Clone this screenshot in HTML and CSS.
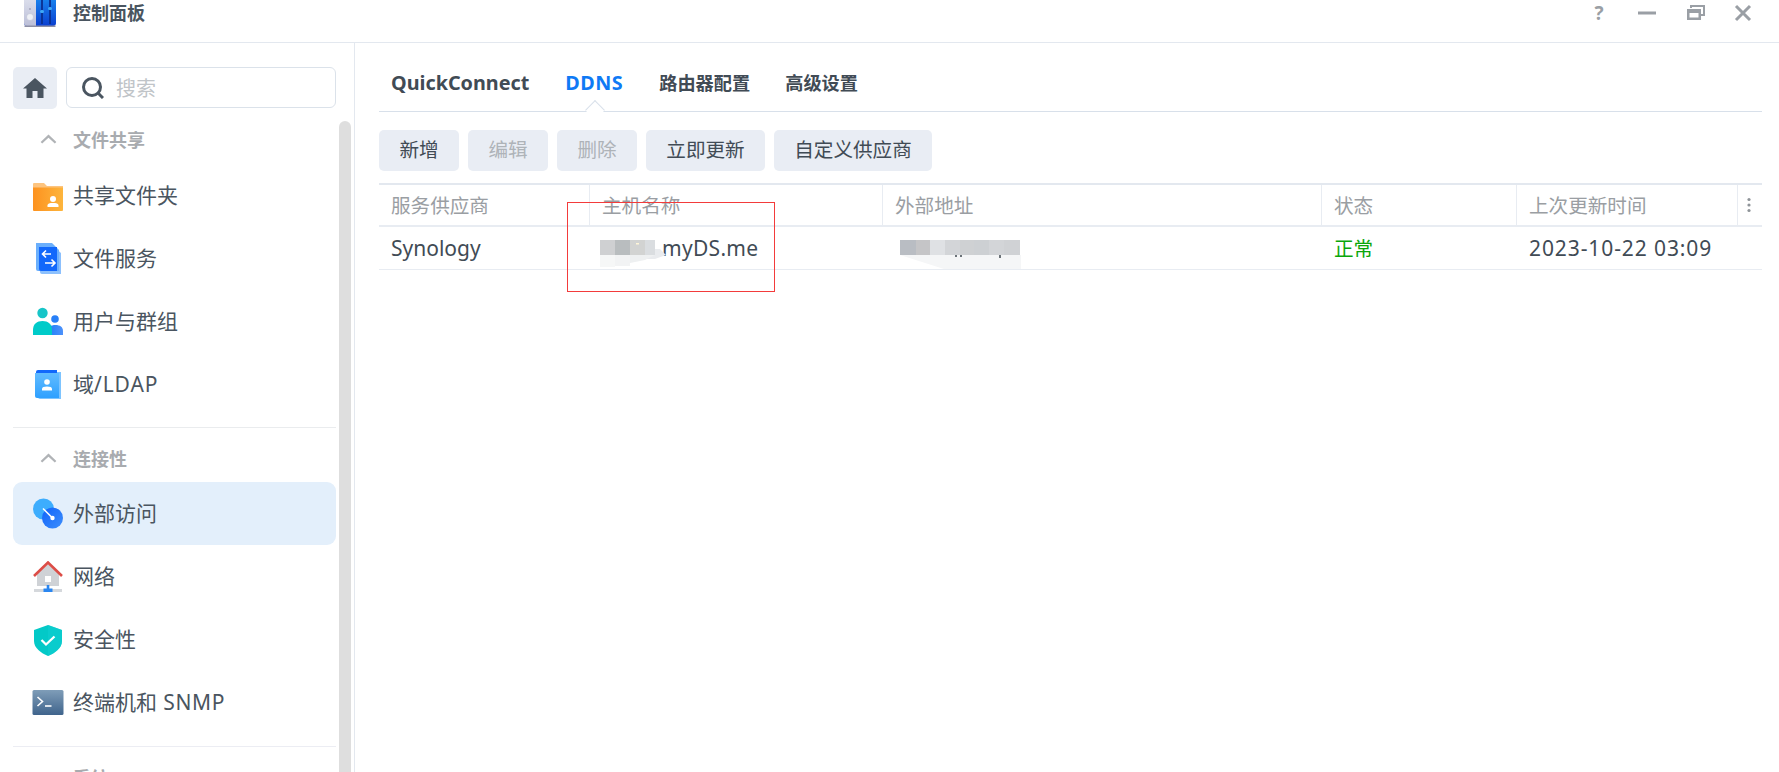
FILE: index.html
```html
<!DOCTYPE html>
<html lang="zh">
<head>
<meta charset="utf-8">
<title>控制面板</title>
<link rel="stylesheet" href="styles.css">
</head>
<body>
<div class="window">
  <header class="titlebar">
    <div class="title-left">
      <svg class="app-icon" viewBox="0 0 34 28">
        <defs><linearGradient id="appb" x1="0" y1="0" x2="0" y2="1"><stop offset="0" stop-color="#1a8af0"/><stop offset="1" stop-color="#0b3fd0"/></linearGradient>
        <linearGradient id="appg" x1="0" y1="0" x2="0" y2="1"><stop offset="0" stop-color="#dfe2ee"/><stop offset="1" stop-color="#bcbfd8"/></linearGradient></defs>
        <rect x="1" y="-4" width="32" height="30" rx="3" fill="url(#appb)"/>
        <path d="M4-4h9v30H4a3 3 0 0 1-3-3V-1a3 3 0 0 1 3-3z" fill="url(#appg)"/>
        <rect x="1.500" y="25.500" width="31" height="1.500" fill="#8d8fa5"/>
        <circle cx="7" cy="17" r="3.500" fill="#eef0f6" stroke="#b5b8cc" stroke-width=".5"/>
        <rect x="6.500" y="8" width="1" height="2" fill="#8d90a8"/>
        <path d="M19 0v24M27 0v24" stroke="#0a2f8f" stroke-width="1.800"/>
        <rect x="17" y="10" width="4" height="3" rx="1.500" fill="#3fa9f5"/>
        <rect x="25" y="7" width="4" height="3" rx="1.500" fill="#3fa9f5"/>
      </svg>
      <span class="title-text">控制面板</span>
    </div>
    <div class="title-actions">
      <span class="help">?</span>
      <svg class="win-icon" viewBox="0 0 20 20"><path d="M1 10h18" stroke="#9a9fa5" stroke-width="3"/></svg>
      <svg class="win-icon" viewBox="0 0 20 20"><path d="M5 5V3h13v9h-3" fill="none" stroke="#9a9fa5" stroke-width="2"/><path d="M1 6h14v11H1z M3.500 10v4.500h9V10z" fill="#9a9fa5" fill-rule="evenodd"/></svg>
      <svg class="win-icon win-close" viewBox="0 0 20 20"><path d="M3 3l14 14M17 3L3 17" stroke="#9a9fa5" stroke-width="3"/></svg>
    </div>
  </header>

  <div class="body">
    <aside class="sidebar">
      <div class="side-top">
        <button class="home-btn">
          <svg class="home-icon" viewBox="0 0 24 20"><path d="M12 0L0 10.500h3.500V20H9.500v-7h5v7h6V10.500H24z" fill="#4a5560"/></svg>
        </button>
        <div class="search">
          <svg class="search-icon" viewBox="0 0 22 22"><circle cx="10" cy="10" r="8.500" fill="none" stroke="#4a5560" stroke-width="3"/><path d="M15.500 15.500L21 21" stroke="#4a5560" stroke-width="3"/></svg>
          <span class="search-ph">搜索</span>
        </div>
      </div>
      <nav class="nav">
        <div class="section">
          <svg class="chev" viewBox="0 0 18 10"><path d="M1.500 9L9 2l7.500 7" fill="none" stroke="#b0b3b6" stroke-width="2.400"/></svg>
          <span>文件共享</span>
        </div>
        <div class="item">
          <svg class="ico" viewBox="0 0 32 32">
            <defs><linearGradient id="fo" x1="0" x2="1"><stop offset="0" stop-color="#fd921f"/><stop offset="1" stop-color="#fdb53d"/></linearGradient></defs>
            <path d="M1 4a1 1 0 0 1 1-1h10l3 3h16v5H1z" fill="#fdc47f"/>
            <path d="M1 7.500h30V30a1 1 0 0 1-1 1H2a1 1 0 0 1-1-1z" fill="url(#fo)"/>
            <circle cx="21" cy="19" r="3" fill="#fff"/><path d="M15.500 27v-1.500c0-2 2-2.500 5.500-2.500s5.500.5 5.500 2.500V27z" fill="#fff"/>
          </svg>
          <span class="label">共享文件夹</span>
        </div>
        <div class="item">
          <svg class="ico" viewBox="0 0 32 32">
            <path d="M6 3h15l8 7v21H10a2 2 0 0 1-2-2z" fill="#8cc0fd"/>
            <path d="M4 0h16l7 7v21H6a2 2 0 0 1-2-2z" fill="#6baffc"/>
            <path d="M7 4h18v24H9a2 2 0 0 1-2-2z" fill="#1268fb"/>
            <path d="M19 11H10.500M14 7.500L10.500 11l3.500 3.500M13 20h10M19.500 16.500L23 20l-3.500 3.500" fill="none" stroke="#fff" stroke-width="1.600"/>
          </svg>
          <span class="label">文件服务</span>
        </div>
        <div class="item">
          <svg class="ico" viewBox="0 0 32 32">
            <defs><linearGradient id="ub" x1="0" x2="1"><stop offset="0" stop-color="#1c7df8"/><stop offset="1" stop-color="#4d92fb"/></linearGradient></defs>
            <circle cx="23" cy="13" r="3.800" fill="#2880f8"/>
            <path d="M15 29v-4c0-4 4-6 8.500-6s7.500 2 7.500 6v4z" fill="url(#ub)"/>
            <circle cx="10.500" cy="7" r="5.200" fill="#17c5c8"/>
            <path d="M1 29v-5c0-6 4-9 9.500-9s9.500 3 9.500 9v5z" fill="#00cbc9"/>
          </svg>
          <span class="label">用户与群组</span>
        </div>
        <div class="item">
          <svg class="ico" viewBox="0 0 32 32">
            <defs><linearGradient id="ld" x1="0" y1="0" x2="0" y2="1"><stop offset="0" stop-color="#62bcff"/><stop offset="1" stop-color="#2ea0ff"/></linearGradient></defs>
            <path d="M6 3h23v27H8a2 2 0 0 1-2-2z" fill="#7dc4ff"/>
            <path d="M4 3a2 2 0 0 1 2-2h19v3H4z" fill="#1268fb"/>
            <path d="M3 4h24v25H5a2 2 0 0 1-2-2z" fill="url(#ld)"/>
            <circle cx="15" cy="13" r="2.800" fill="#fff"/><path d="M10 21.500v-1.500c0-1.800 2-2.500 5-2.500s5 .7 5 2.500v1.500z" fill="#fff"/>
          </svg>
          <span class="label">域<span class="wide-a">/LDAP</span></span>
        </div>
        <div class="divider"></div>
        <div class="section section-2">
          <svg class="chev" viewBox="0 0 18 10"><path d="M1.500 9L9 2l7.500 7" fill="none" stroke="#b0b3b6" stroke-width="2.400"/></svg>
          <span>连接性</span>
        </div>
        <div class="item active">
          <svg class="ico" viewBox="0 0 32 32">
            <defs><linearGradient id="ex" x1="0" y1="0" x2="1" y2="1"><stop offset="0" stop-color="#0f62fb"/><stop offset="1" stop-color="#3e8ffb"/></linearGradient></defs>
            <circle cx="11.500" cy="11" r="10.500" fill="#3dadfd"/>
            <circle cx="20.500" cy="20" r="10.500" fill="url(#ex)"/>
            <path d="M11 10.500L20.500 20" stroke="#fff" stroke-width="1.500"/><circle cx="20.500" cy="20" r="2.200" fill="#fff"/>
          </svg>
          <span class="label">外部访问</span>
        </div>
        <div class="item">
          <svg class="ico" viewBox="0 0 32 32">
            <path d="M5 13L16 3l11 10v12H5z" fill="#cfd2d6"/>
            <rect x="13" y="15" width="6" height="6" fill="#fff"/>
            <path d="M2 15L16 1.500 30 15" fill="none" stroke="#dc4d47" stroke-width="2.600"/>
            <rect x="2" y="28" width="28" height="3" fill="#d5d8dc"/>
            <path d="M14.700 24h2.600v3.500h3.200V31h-9v-3.500h3.200z" fill="#2a86f0"/>
          </svg>
          <span class="label">网络</span>
        </div>
        <div class="item">
          <svg class="ico" viewBox="0 0 32 32">
            <path d="M16 1l14 5v11c0 7-7 12-14 15C9 29 2 24 2 17V6z" fill="#03c9c7"/>
            <path d="M16 1l14 5v11c0 7-7 12-14 15z" fill="#0fcfd0" opacity=".6"/>
            <path d="M9.500 16l4.500 4.500 8.500-8" fill="none" stroke="#fff" stroke-width="2.300"/>
          </svg>
          <span class="label">安全性</span>
        </div>
        <div class="item">
          <svg class="ico" viewBox="0 0 32 32">
            <defs><linearGradient id="te" x1="0" y1="0" x2="0" y2="1"><stop offset="0" stop-color="#7f9db8"/><stop offset="1" stop-color="#3f648c"/></linearGradient></defs>
            <rect x="0.500" y="3" width="31" height="25" rx="1.500" fill="url(#te)"/>
            <path d="M5.500 10l5 4.500-5 4.500" fill="none" stroke="#fff" stroke-width="1.600"/>
            <path d="M13 19h6.500" stroke="#fff" stroke-width="1.600"/>
          </svg>
          <span class="label">终端机和<span class="wide-b"> SNMP</span></span>
        </div>
        <div class="divider divider-last"></div>
        <div class="section">
          <svg class="chev" viewBox="0 0 18 10"><path d="M1.500 9L9 2l7.500 7" fill="none" stroke="#b0b3b6" stroke-width="2.400"/></svg>
          <span>系统</span>
        </div>
      </nav>
      <div class="scrollbar"></div>
    </aside>

    <main class="main">
      <div class="tabs">
        <span class="tab tab-latin">QuickConnect</span>
        <span class="tab tab-latin tab-on">DDNS</span>
        <span class="tab">路由器配置</span>
        <span class="tab tab-last">高级设置</span>
      </div>
      <div class="toolbar">
        <button class="btn btn-s">新增</button>
        <button class="btn btn-s off">编辑</button>
        <button class="btn btn-s off">删除</button>
        <button class="btn btn-m">立即更新</button>
        <button class="btn btn-l">自定义供应商</button>
      </div>
      <table class="grid">
        <colgroup>
          <col class="c1"><col class="c2"><col class="c3"><col class="c4"><col class="c5"><col class="c6">
        </colgroup>
        <thead>
          <tr>
            <th>服务供应商</th><th>主机名称</th><th>外部地址</th><th>状态</th><th>上次更新时间</th>
            <th class="more"><svg class="dots" viewBox="0 0 4 16"><circle cx="2" cy="2.500" r="1.600"/><circle cx="2" cy="8" r="1.600"/><circle cx="2" cy="13.500" r="1.600"/></svg></th>
          </tr>
        </thead>
        <tbody>
          <tr>
            <td class="latin">Synology</td><td class="latin host">myDS.me</td><td></td><td class="ok">正常</td><td class="latin date">2023-10-22 03:09</td><td></td>
          </tr>
        </tbody>
      </table>

      <svg class="mosaic mosaic-host" viewBox="0 0 80 50">
        <path d="M0 42L45 2h5l4 26 12 12L0 44z" fill="#fff"/>
        <rect x="9" y="15" width="15" height="15" fill="#cfd0d2"/>
        <rect x="24" y="15" width="15" height="15" fill="#b9bdbf"/>
        <rect x="39" y="15" width="15" height="15" fill="#d2d3d2"/>
        <rect x="54" y="15" width="10" height="15" fill="#dadde0"/>
        <path d="M64 24h5l6 6-11 4H54v-4h10z" fill="#e9ebee"/>
        <rect x="9" y="30" width="15" height="12" fill="#f6f7f7"/>
        <rect x="24" y="30" width="15" height="11" fill="#f2f3f4"/>
        <path d="M39 30h25l-10 5-15 3z" fill="#eef0f1"/>
        <rect x="45" y="18" width="3" height="1.500" fill="#fff6d8"/>
      </svg>
      <svg class="mosaic mosaic-addr" viewBox="0 0 140 40">
        <path d="M0 10h130v26H40z" fill="#fff"/>
        <rect x="11" y="10" width="16" height="15" fill="#b9bdc3"/>
        <rect x="27" y="10" width="14" height="15" fill="#c5c5c7"/>
        <rect x="41" y="10" width="15" height="15" fill="#dfe1e4"/>
        <rect x="56" y="10" width="15" height="15" fill="#d3d5d8"/>
        <rect x="71" y="10" width="14" height="15" fill="#cfd1d3"/>
        <rect x="85" y="10" width="15" height="15" fill="#cdd0d3"/>
        <rect x="100" y="10" width="15" height="15" fill="#d3d5d8"/>
        <rect x="115" y="10" width="16" height="15" fill="#d0d2d5"/>
        <path d="M11 25h121v14H55z" fill="#f5f6f7"/>
        <rect x="66" y="25" width="2" height="2" fill="#6b7278"/><rect x="71" y="25" width="2" height="2" fill="#6b7278"/><rect x="110" y="25" width="2" height="3" fill="#6b7278"/>
      </svg>
      <div class="redbox"></div>
    </main>
  </div>
</div>
</body>
</html>
```
FILE: styles.css
```css
* { box-sizing: border-box; }
html, body { margin: 0; padding: 0; height: 100%; overflow: hidden; background: #fff; }
body { font-family: "Noto Sans", "Noto Sans CJK SC", sans-serif; color: #414b55; }

.window { width: 1779px; height: 772px; display: flex; flex-direction: column; overflow: hidden; }

.titlebar { height: 43px; flex: none; border-bottom: 1px solid #e3e8ef; display: flex; justify-content: space-between; align-items: flex-start; }
.title-left { display: flex; align-items: flex-start; padding-left: 23px; height: 28px; }
.app-icon { width: 34px; height: 28px; display: block; }
.title-text { margin-left: 16px; font-size: 18px; font-weight: 700; line-height: 26px; color: #4a5560; }
.title-actions { display: flex; align-items: center; height: 26px; padding-right: 26px; gap: 29px; }
.help { width: 20px; margin-right: -1px; text-align: center; font-size: 19px; font-weight: 700; color: #9a9fa5; line-height: 26px; }
.win-icon { width: 20px; height: 20px; display: block; }
.win-close { margin-left: -2px; }

.body { flex: 1; display: flex; min-height: 0; }

.sidebar { position: relative; width: 355px; flex: none; border-right: 1px solid #e3e8ef; padding: 24px 18px 0 13px; overflow: hidden; }
.side-top { display: flex; gap: 9px; height: 43px; }
.home-btn { width: 44px; height: 42px; border: 0; border-radius: 5px; background: #e9edf4; padding: 0; display: flex; align-items: center; justify-content: center; }
.home-icon { width: 24px; height: 20px; display: block; }
.search { flex: 1; height: 41px; border: 1px solid #dbe2ea; border-radius: 6px; display: flex; align-items: center; padding-left: 15px; background: #fff; }
.search-icon { width: 22px; height: 22px; display: block; }
.search-ph { margin-left: 12px; font-size: 20px; color: #c0c4c8; }

.nav { margin-top: -1px; }
.section { height: 55px; padding-top: 18px; display: flex; align-items: flex-start; line-height: 26px; font-size: 18px; font-weight: 700; color: #a8abaf; padding-left: 27px; gap: 16px; }
.section-2 { height: 54px; }
.chev { width: 17px; height: 10px; margin-top: 7px; display: block; flex: none; }
.item { height: 63px; display: flex; align-items: center; padding-left: 19px; gap: 9px; font-size: 21px; color: #4a5560; border-radius: 9px; }
.label { margin-bottom: 3px; }
.wide-a { letter-spacing: .9px; }
.wide-b { letter-spacing: .7px; }
.item.active { background: #e3effb; }
.ico { width: 32px; height: 32px; display: block; flex: none; }
.divider { height: 1px; background: #eaecee; margin-top: 11px; }
.divider-last { margin-top: 12px; background: #ecedf3; }
.scrollbar { position: absolute; left: 339px; top: 78px; width: 12px; bottom: 0; border-radius: 6px 6px 0 0; background: #dedede; }

.main { position: relative; flex: 1; padding: 0 17px 0 24px; min-width: 0; }
.tabs { height: 69px; border-bottom: 1px solid #d8e0ea; display: flex; gap: 36px; padding: 27px 0 0 12px; position: relative; }
.tab { position: relative; font-size: 18.200px; font-weight: 700; line-height: 26px; height: 26px; color: #414b55; }
.tab-latin { font-size: 19.800px; }
.tab-on { color: #0f7af5; letter-spacing: .5px; }
.tab-last { margin-left: -1px; }
.tab-on::after { content: ""; position: absolute; left: 50%; top: 33px; width: 13px; height: 13px; margin-left: -6.500px; background: #fff; border: 1px solid #d8e0ea; border-right: 0; border-bottom: 0; transform: rotate(45deg); }

.toolbar { display: flex; gap: 9px; margin-top: 18px; }
.btn { height: 41px; border: 0; border-radius: 5px; background: #e9edf4; padding: 0 0 4px; font: inherit; font-size: 19.600px; color: #414b55; }
.btn-s { width: 80px; }
.btn-m { width: 119px; }
.btn-l { width: 158px; }
.btn.off { color: #aeb3b8; }

.grid { margin-top: 12px; width: 1383px; table-layout: fixed; border-collapse: separate; border-spacing: 0; border-top: 2px solid #e3e8ef; }
.c1 { width: 211px; } .c2 { width: 293px; } .c3 { width: 439px; } .c4 { width: 195px; } .c5 { width: 221px; } .c6 { width: 24px; }
.grid th { height: 42px; padding: 0 12px 1px; text-align: left; font-weight: 400; font-size: 19.600px; color: #9a9ea3; border-right: 1px solid #e8ecf2; border-bottom: 2px solid #e8ecf2; }
.grid th.more { border-right: 0; padding: 0 0 0 9px; }
.dots { width: 4px; height: 16px; display: block; fill: #8f9499; }
.grid td { height: 43px; padding: 0 12px; font-size: 19.600px; color: #414b55; border-bottom: 1px solid #e8ecf2; white-space: nowrap; }
.grid td.latin { font-size: 21px; }
.grid td.host { padding-left: 72px; letter-spacing: .3px; }
.grid td.date { letter-spacing: .9px; }
.grid td.ok { color: #0aa60a; padding-bottom: 1px; }

.mosaic { position: absolute; display: block; }
.mosaic-host { left: 236px; top: 182px; width: 80px; height: 50px; }
.mosaic-addr { left: 534px; top: 187px; width: 140px; height: 40px; }
.redbox { position: absolute; left: 212px; top: 159px; width: 208px; height: 90px; border: 1px solid #f33b3b; }
```
